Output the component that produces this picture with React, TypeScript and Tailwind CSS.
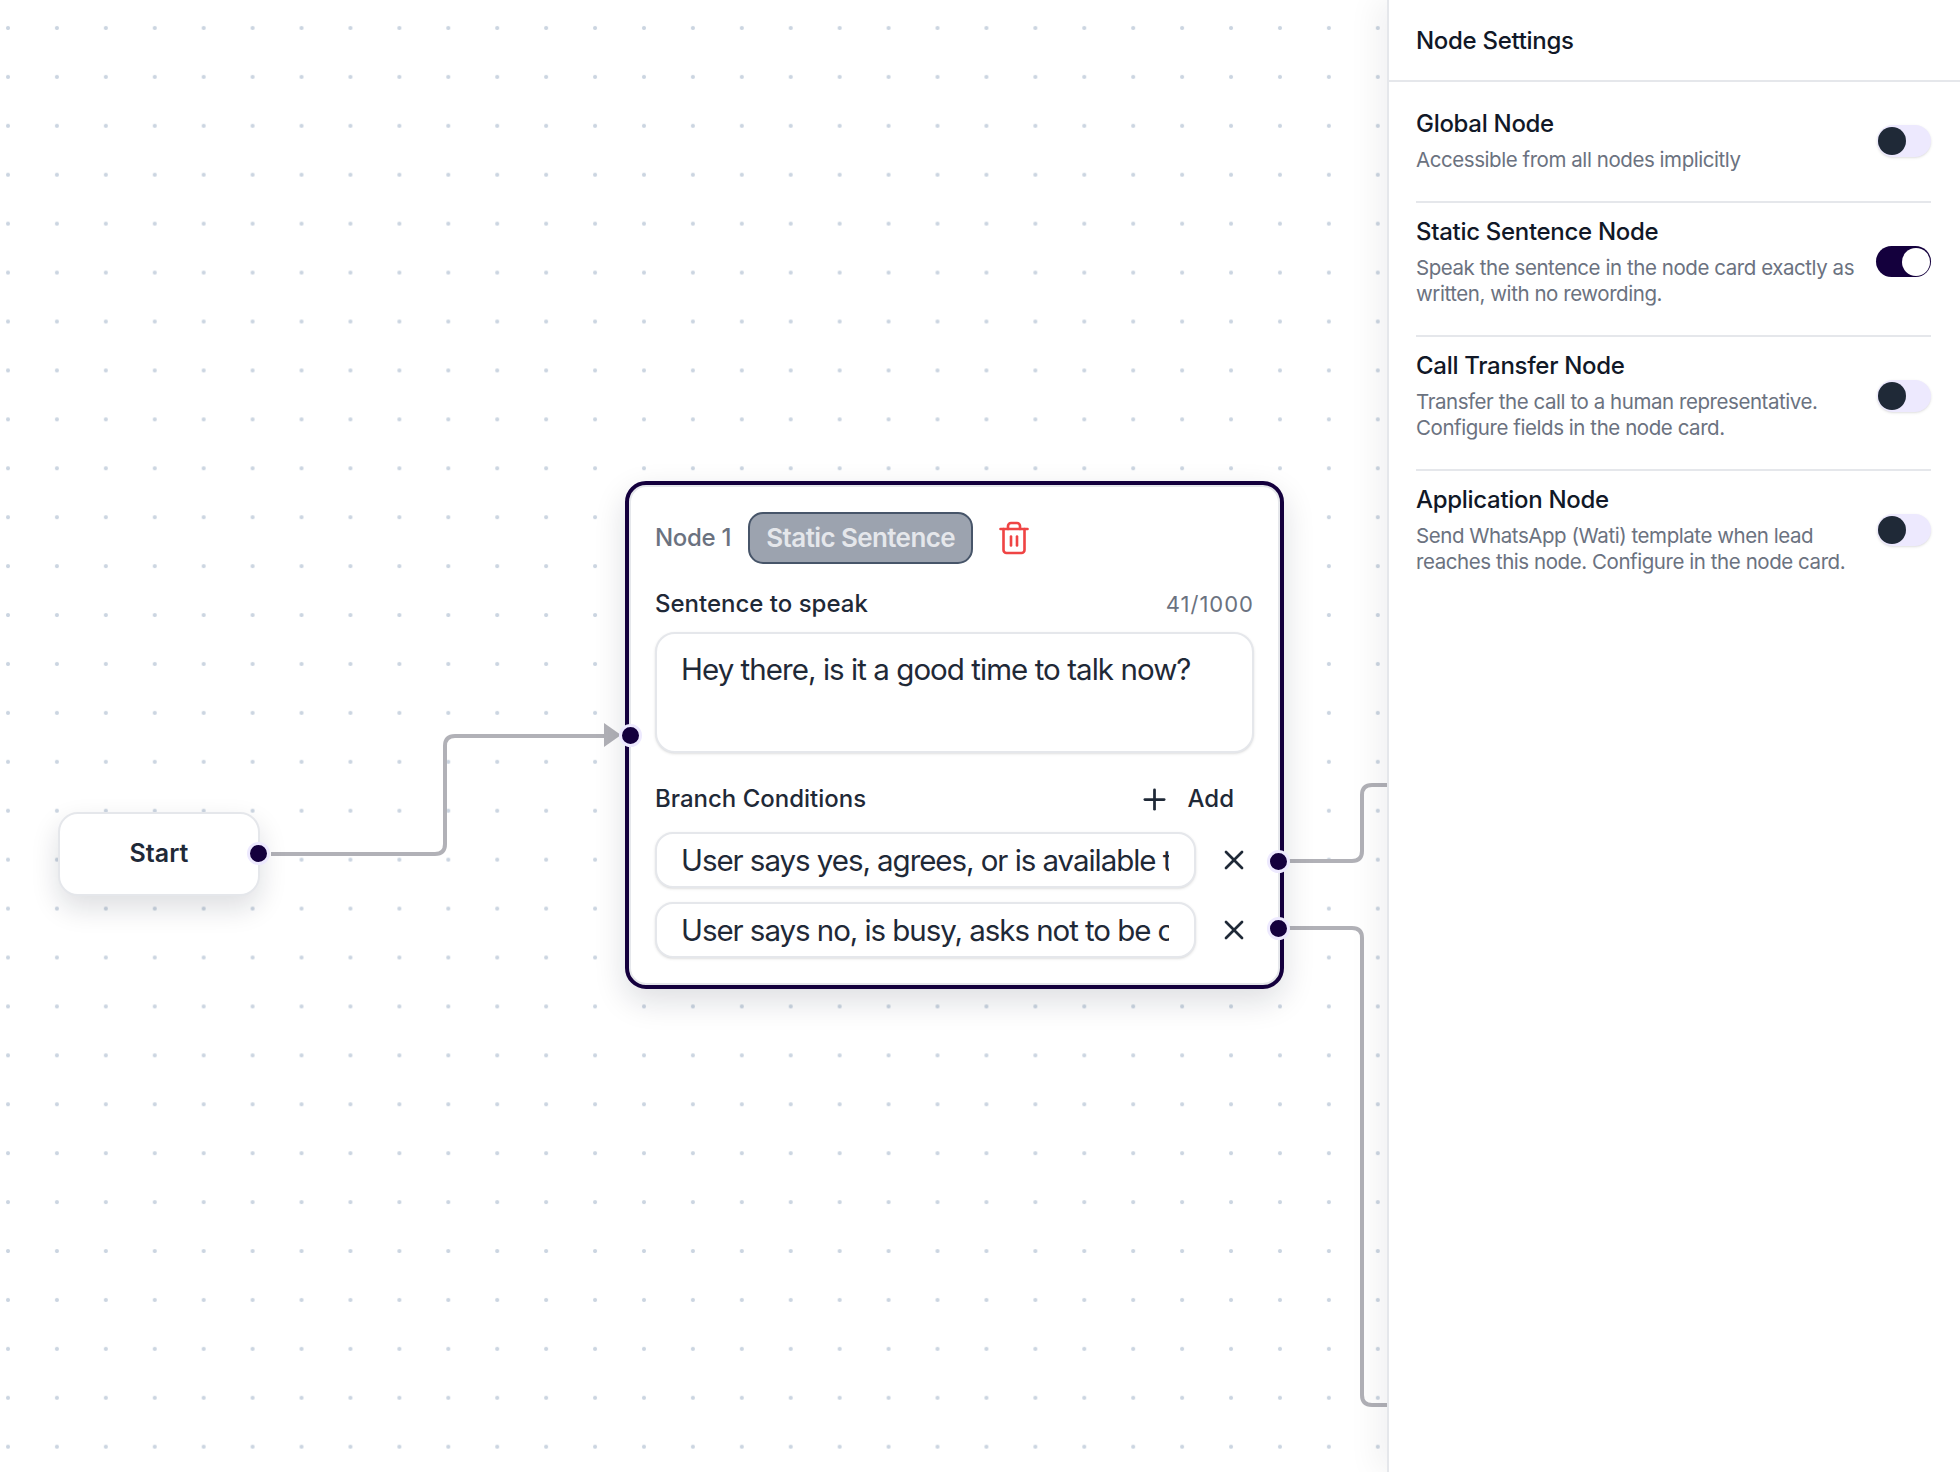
import { Trash2, Plus, X } from "lucide-react";

const settings = [
  { title: "Global Node", desc: "Accessible from all nodes implicitly", on: false },
  { title: "Static Sentence Node", desc: "Speak the sentence in the node card exactly as\nwritten, with no rewording.", on: true },
  { title: "Call Transfer Node", desc: "Transfer the call to a human representative.\nConfigure fields in the node card.", on: false },
  { title: "Application Node", desc: "Send WhatsApp (Wati) template when lead\nreaches this node. Configure in the node card.", on: false },
];

function Toggle({ on }: { on: boolean }) {
  if (on) {
    return (
      <div className="w-[55px] h-[31px] shrink-0 rounded-full bg-[#14003d] flex items-center justify-end">
        <div className="w-[28px] h-[28px] rounded-full bg-white mr-[1.5px]" />
      </div>
    );
  }
  return (
    <div className="w-[54px] h-[32px] shrink-0 rounded-full bg-[#ede9fe] flex items-center pl-px shadow-sm">
      <div className="w-[28px] h-[28px] rounded-full bg-[#1f2937]" />
    </div>
  );
}

function Handle({ className }: { className: string }) {
  return <div className={`absolute w-[23px] h-[23px] rounded-full bg-[#14003d] border-[3px] border-[#ede9fe] ${className}`} />;
}

function Condition({ text }: { text: string }) {
  return (
    <div className="flex items-center">
      <input
        readOnly
        value={text}
        className="w-[541px] h-[56px] pl-[24px] pr-[25px] rounded-[18px] border-2 border-[#e5e7eb] bg-white text-[29.5px] tracking-[-1.05px] text-[#1f2937] shadow-sm outline-none"
      />
      <div className="ml-[22px] w-[32px] flex justify-center text-[#1f2937]">
        <X className="w-[32px] h-[32px]" strokeWidth={2} />
      </div>
    </div>
  );
}

export default function App() {
  return (
    <div className="flex w-[1960px] h-[1472px] overflow-hidden bg-white font-[Inter,sans-serif]">
      <div className="relative flex-1 bg-[radial-gradient(circle_at_8px_28px,#cbd5e1_1.5px,transparent_2.5px)] bg-size-[48.93px_48.93px]">
        {/* edges */}
        <svg className="absolute inset-0 w-full h-full" fill="none" stroke="#b1b1b7" strokeWidth="4">
          <path d="M271 854 H435 Q445 854 445 844 V746 Q445 736 455 736 H606" />
          <path d="M1288 861 H1352 Q1362 861 1362 851 V795 Q1362 785 1372 785 H1388" />
          <path d="M1288 928 H1352 Q1362 928 1362 938 V1395 Q1362 1405 1372 1405 H1388" />
          <path d="M604 723 L621 735 L604 747 Z" fill="#b1b1b7" stroke="none" />
        </svg>

        {/* start node */}
        <div className="absolute left-[58px] top-[812px] w-[202px] h-[84px] rounded-[20px] border-2 border-[#e5e7eb] bg-white shadow-[0_12px_28px_rgba(15,23,42,0.14)] flex items-center justify-center text-[25px] font-semibold text-[#1f2937]">
          Start
          <Handle className="left-[187px] top-[28px]" />
        </div>

        {/* node card */}
        <div className="absolute left-[625px] top-[481px] w-[659px] h-[508px] rounded-[21px] border-4 border-[#14003d] bg-white shadow-[0_12px_32px_rgba(15,23,42,0.14),inset_0_0_0_2px_#e5e7eb] px-[26px] pt-[27px] flex flex-col">
          <div className="flex items-center h-[52px]">
            <span className="text-[24px] font-medium text-[#6b7280] tracking-[-0.3px]">Node 1</span>
            <span className="ml-[17px] w-[225px] h-[52px] pb-[2px] rounded-[15px] border-2 border-[#475569] bg-[#9ca3af] flex items-center justify-center text-[26px] font-semibold tracking-[-0.6px] text-[#e5e7eb]">
              Static Sentence
            </span>
            <Trash2 className="ml-[23px] w-[36px] h-[36px] text-[#ef4444]" strokeWidth={1.75} />
          </div>

          <div className="flex items-center justify-between h-[32px] mt-[24px]">
            <span className="text-[24px] font-medium text-[#1f2937]">Sentence to speak</span>
            <span className="text-[22px] tracking-[1px] text-[#6b7280]">41/1000</span>
          </div>
          <textarea
            readOnly
            value="Hey there, is it a good time to talk now?"
            className="mt-[12px] w-full h-[121px] px-[24px] py-[15px] rounded-[20px] border-2 border-[#e5e7eb] bg-white text-[29.5px] leading-[40px] tracking-[-0.95px] text-[#1f2937] shadow-sm outline-none resize-none"
          />

          <div className="flex items-center justify-between h-[32px] mt-[30px] pr-[20px]">
            <span className="text-[24px] font-medium text-[#1f2937]">Branch Conditions</span>
            <span className="flex items-center gap-[17px] text-[24px] font-medium text-[#1f2937]">
              <Plus className="w-[33px] h-[33px]" strokeWidth={2} />
              Add
            </span>
          </div>
          <div className="flex flex-col gap-[14px] mt-[17px]">
            <Condition text="User says yes, agrees, or is available to talk now" />
            <Condition text="User says no, is busy, asks not to be called" />
          </div>

          <Handle className="left-[-10px] top-[239px]" />
          <Handle className="left-[638px] top-[365px]" />
          <Handle className="left-[638px] top-[432px]" />
        </div>
      </div>

      {/* settings panel */}
      <div className="relative w-[573px] shrink-0 bg-white border-l-2 border-[#e5e7eb] shadow-[-10px_0_30px_rgba(15,23,42,0.06)]">
        <div className="h-[82px] flex items-center px-[27px] pt-[1px] border-b-2 border-[#e5e7eb] text-[24px] font-medium text-[#111827] tracking-[-0.3px]">
          Node Settings
        </div>
        <div className="px-[27px] pr-[29px] pt-[13px]">
          {settings.map((s, i) => (
            <div key={i} className={`flex items-center justify-between pt-[13px] pb-[28px] ${i < settings.length - 1 ? "border-b-2 border-[#e5e7eb]" : ""}`}>
              <div>
                <div className="text-[24px] leading-[32px] font-medium text-[#111827] tracking-[-0.3px]">{s.title}</div>
                <div className="mt-[7px] text-[20.5px] leading-[26px] text-[#6b7280] whitespace-pre-line tracking-[-0.44px]">{s.desc}</div>
              </div>
              <Toggle on={s.on} />
            </div>
          ))}
        </div>
      </div>
    </div>
  );
}
